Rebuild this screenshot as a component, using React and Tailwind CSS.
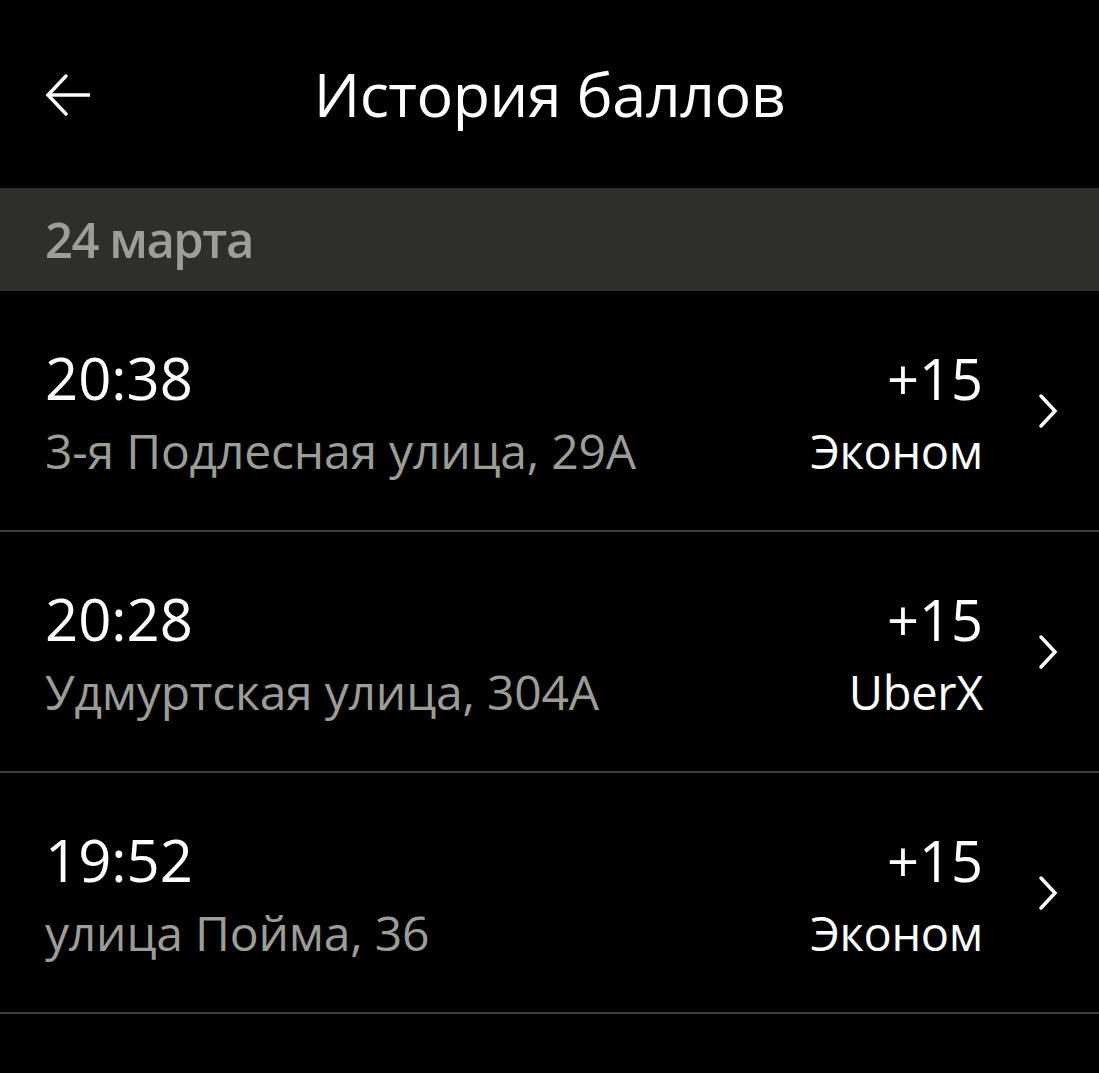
const rows = [
  { time: '20:38', address: '3-я Подлесная улица, 29А', points: '+15', tariff: 'Эконом' },
  { time: '20:28', address: 'Удмуртская улица, 304А', points: '+15', tariff: 'UberX' },
  { time: '19:52', address: 'улица Пойма, 36', points: '+15', tariff: 'Эконом' },
]

function BackArrow() {
  return (
    <svg width="50" height="50" viewBox="0 0 50 50" fill="none" stroke="white" strokeWidth="3.5">
      <path d="M5 25 H47" />
      <path d="M23 6 L5 25 L23 44" strokeLinecap="round" />
    </svg>
  )
}

function Chevron() {
  return (
    <svg width="22" height="36" viewBox="0 0 22 36" fill="none" stroke="white" strokeWidth="3.5" strokeLinecap="round">
      <path d="M4 3 L18 18 L4 33" />
    </svg>
  )
}

function Row({ time, address, points, tariff }) {
  return (
    <div className="flex h-[241px] items-center border-b-2 border-[#3d3d3b] pl-[45px] pr-[40px]">
      <div className="flex min-w-0 flex-1 flex-col">
        <span className="text-[58px] leading-[80px] text-white">{time}</span>
        <span className="text-[48px] leading-[66px] tracking-[-0.2px] text-[#9c9d94]">{address}</span>
      </div>
      <div className="flex flex-col items-end">
        <span className="text-[56px] font-medium leading-[80px] text-white">{points}</span>
        <span className="text-[47px] leading-[66px] tracking-[-0.3px] text-white">{tariff}</span>
      </div>
      <div className="ml-[54px] flex">
        <Chevron />
      </div>
    </div>
  )
}

export default function App() {
  return (
    <div className="min-h-screen bg-black font-['Open_Sans','Noto_Sans',sans-serif]">
      <header className="relative flex h-[188px] items-center justify-center">
        <div className="absolute left-[43px] top-[70px]">
          <BackArrow />
        </div>
        <h1 className="text-[61px] font-medium tracking-[-0.5px] text-white">История баллов</h1>
      </header>
      <div className="flex h-[103px] items-center bg-[#2d2f2a] px-[45px]">
        <span className="text-[49px] font-semibold tracking-[-1.5px] text-[#9d9f97]">24 марта</span>
      </div>
      {rows.map((r) => (
        <Row key={r.time} {...r} />
      ))}
    </div>
  )
}
